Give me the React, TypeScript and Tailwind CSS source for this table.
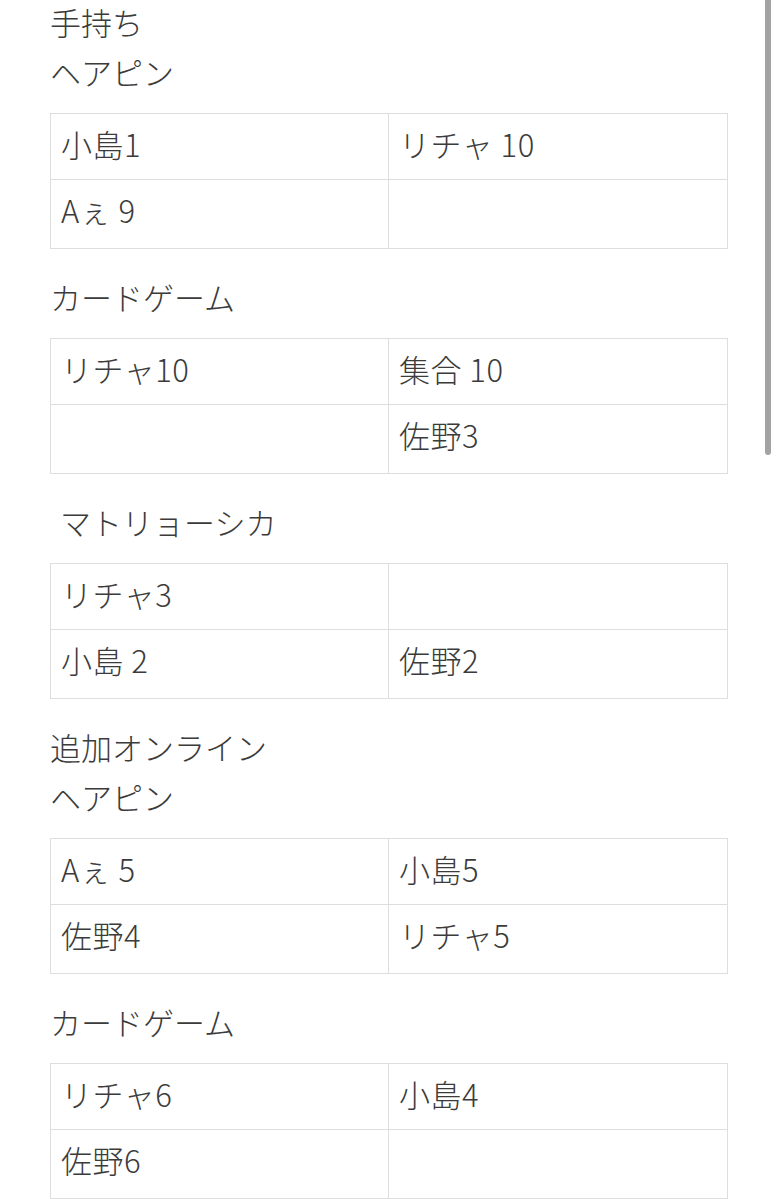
import React from 'react';

type Section = {
  headings: string[];
  rows: [string, string][];
  indent?: boolean;
};

const sections: Section[] = [
  {
    headings: ['手持ち', 'ヘアピン'],
    rows: [
      ['小島1', 'リチャ 10'],
      ['Aぇ 9', ''],
    ],
  },
  {
    headings: ['カードゲーム'],
    rows: [
      ['リチャ10', '集合 10'],
      ['', '佐野3'],
    ],
  },
  {
    headings: ['マトリョーシカ'],
    indent: true,
    rows: [
      ['リチャ3', ''],
      ['小島 2', '佐野2'],
    ],
  },
  {
    headings: ['追加オンライン', 'ヘアピン'],
    rows: [
      ['Aぇ 5', '小島5'],
      ['佐野4', 'リチャ5'],
    ],
  },
  {
    headings: ['カードゲーム'],
    rows: [
      ['リチャ6', '小島4'],
      ['佐野6', ''],
    ],
  },
];

function ScoreTable({ rows }: { rows: [string, string][] }) {
  return (
    <div className="mt-4 grid grid-cols-2 border border-[#dedede]">
      {rows.map((row, i) => (
        <React.Fragment key={i}>
          {row.map((cell, j) => (
            <div
              key={j}
              className={`pl-[10px] ${i === 0 ? 'h-[66px] border-b border-[#dedede]' : 'h-[68px]'} ${
                j === 0 ? 'border-r border-[#dedede]' : ''
              }`}
            >
              <span className="block leading-[60px] whitespace-pre tracking-[0.5px]">{cell}</span>
            </div>
          ))}
        </React.Fragment>
      ))}
    </div>
  );
}

export default function App() {
  return (
    <div
      className="relative min-h-screen overflow-hidden bg-white text-[31px] font-light text-[#3b3b3b]"
      style={{ fontFamily: '"Noto Sans CJK JP", "Noto Sans", sans-serif' }}
    >
      <div className="-mt-[3px] pl-[50px] pr-[49px]">
        {sections.map((section, i) => (
          <div key={i} className={i === 0 ? '' : 'mt-[23px]'}>
            {section.headings.map(h => (
              <div key={h} className={`h-[50px] leading-[50px] ${section.indent ? 'pl-[10px]' : ''}`}>
                {h}
              </div>
            ))}
            <ScoreTable rows={section.rows} />
          </div>
        ))}
      </div>

      {/* scroll indicator */}
      <div className="absolute top-0 left-[765px] h-[455px] w-[6px] rounded-b-full bg-[#a3a3a3]" />
    </div>
  );
}
